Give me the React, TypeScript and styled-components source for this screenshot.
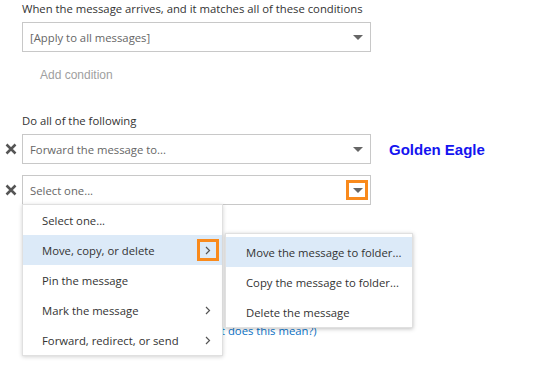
import React from "react";
import styled, { createGlobalStyle, css } from "styled-components";

const Global = createGlobalStyle`
  html, body { margin: 0; padding: 0; background: #fff; }
  body { font-family: "Open Sans", "Noto Sans", sans-serif; color: #333; }
`;

const Page = styled.div`
  position: relative;
  width: 536px;
  height: 366px;
  overflow: hidden;
  padding: 1px 0 0 22px;
  box-sizing: border-box;
`;

const Label = styled.div<{ $top?: number }>`
  font-size: 11.3px;
  line-height: 16px;
  color: #333;
  margin-top: ${(p) => p.$top ?? 0}px;
  height: 16px;
`;

const Row = styled.div<{ $top: number }>`
  position: relative;
  display: flex;
  align-items: center;
  margin-top: ${(p) => p.$top}px;
  margin-left: -22px;
`;

const RemoveIcon = styled.span`
  width: 22px;
  display: flex;
  justify-content: center;
  align-items: center;
  box-sizing: border-box;
`;

const Gutter = styled.span`
  width: 22px;
`;

const Select = styled.div`
  width: 349px;
  height: 30px;
  box-sizing: border-box;
  border: 1px solid #c8c8c8;
  display: flex;
  align-items: center;
  justify-content: space-between;
  padding: 0 2px 0 7px;
  font-size: 11.3px;
  color: #666;
  background: #fff;
`;

const ArrowBox = styled.span<{ $hl?: boolean }>`
  width: 22px;
  height: 20px;
  box-sizing: border-box;
  display: flex;
  align-items: center;
  justify-content: center;
  border: 3px solid ${(p) => (p.$hl ? "#f98a1c" : "transparent")};
`;

const Triangle = styled.span`
  width: 0;
  height: 0;
  border-left: 5px solid transparent;
  border-right: 5px solid transparent;
  border-top: 5px solid #666;
  margin-left: 1px;
`;

const AddCondition = styled.div`
  font-family: "Liberation Sans", Arial, sans-serif;
  font-size: 12px;
  color: #a0a0a0;
  padding-left: 18px;
  margin-top: 16px;
  height: 14px;
  line-height: 14px;
`;

const Eagle = styled.span`
  font-family: "Liberation Sans", Arial, sans-serif;
  font-weight: bold;
  font-size: 15px;
  color: #1414f0;
  margin-left: 18px;
`;

const HelpLine = styled.div`
  margin-top: 118px;
  font-size: 11.3px;
  padding-left: 172px;
  height: 16px;
  line-height: 16px;
`;

const Link = styled.span`
  color: #0a72c6;
`;

const Menu = styled.div`
  position: absolute;
  left: 22px;
  top: 204px;
  width: 201px;
  background: #fff;
  border: 1px solid #e0e0e0;
  box-shadow: 0 1px 4px rgba(0, 0, 0, 0.18);
  box-sizing: border-box;
  z-index: 2;
`;

const SubMenu = styled.div`
  position: absolute;
  left: 225px;
  top: 233px;
  width: 188px;
  padding-top: 3px;
  background: #fff;
  border: 1px solid #e0e0e0;
  box-shadow: 0 1px 4px rgba(0, 0, 0, 0.25);
  box-sizing: border-box;
  z-index: 3;
`;

const Item = styled.div<{ $active?: boolean; $pad: number }>`
  height: 30px;
  display: flex;
  align-items: center;
  justify-content: space-between;
  padding: 0 3px 0 ${(p) => p.$pad}px;
  font-size: 11.3px;
  color: #333;
  white-space: nowrap;
  ${(p) =>
    p.$active &&
    css`
      background: #dceaf8;
    `}
`;

const Chevron = styled.span<{ $hl?: boolean }>`
  width: 22px;
  height: 22px;
  box-sizing: border-box;
  display: flex;
  align-items: center;
  justify-content: center;
  border: 3px solid ${(p) => (p.$hl ? "#f98a1c" : "transparent")};
`;

const XIcon = () => (
  <svg width="12" height="12" viewBox="0 0 12 12">
    <path d="M1.5 1.5 L10.5 10.5 M10.5 1.5 L1.5 10.5" stroke="#555" strokeWidth="2.5" strokeLinecap="butt" />
  </svg>
);

const ChevronIcon = () => (
  <svg width="6" height="9" viewBox="0 0 6 9">
    <path d="M1 1 L4.5 4.5 L1 8" fill="none" stroke="#555" strokeWidth="1.2" />
  </svg>
);

export default function App() {
  return (
    <>
      <Global />
      <Page>
        <Label>When the message arrives, and it matches all of these conditions</Label>
        <Row $top={5}>
          <Gutter />
          <Select>
            [Apply to all messages]
            <ArrowBox>
              <Triangle />
            </ArrowBox>
          </Select>
        </Row>
        <AddCondition>Add condition</AddCondition>
        <Label $top={31}>Do all of the following</Label>
        <Row $top={5}>
          <RemoveIcon>
            <XIcon />
          </RemoveIcon>
          <Select>
            Forward the message to...
            <ArrowBox>
              <Triangle />
            </ArrowBox>
          </Select>
          <Eagle>Golden Eagle</Eagle>
        </Row>
        <Row $top={11}>
          <RemoveIcon>
            <XIcon />
          </RemoveIcon>
          <Select>
            Select one...
            <ArrowBox $hl>
              <Triangle />
            </ArrowBox>
          </Select>
        </Row>
        <HelpLine>
          <Link>(What does this mean?)</Link>
        </HelpLine>

        <Menu>
          <Item $pad={19}>Select one...</Item>
          <Item $pad={19} $active>
            Move, copy, or delete
            <Chevron $hl>
              <ChevronIcon />
            </Chevron>
          </Item>
          <Item $pad={19}>Pin the message</Item>
          <Item $pad={19}>
            Mark the message
            <Chevron>
              <ChevronIcon />
            </Chevron>
          </Item>
          <Item $pad={19}>
            Forward, redirect, or send
            <Chevron>
              <ChevronIcon />
            </Chevron>
          </Item>
        </Menu>
        <SubMenu>
          <Item $pad={20} $active>Move the message to folder...</Item>
          <Item $pad={20}>Copy the message to folder...</Item>
          <Item $pad={20}>Delete the message</Item>
        </SubMenu>
      </Page>
    </>
  );
}
